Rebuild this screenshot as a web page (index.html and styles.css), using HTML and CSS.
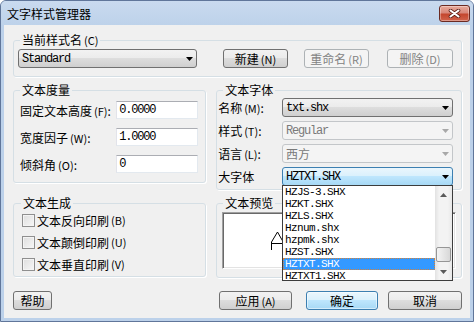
FILE: index.html
```html
<!DOCTYPE html>
<html lang="zh-CN">
<head>
    <meta charset="UTF-8">
    <meta name="viewport" content="width=device-width, initial-scale=1.0">
    <title>文字样式管理器</title>
    <link rel="stylesheet" href="styles.css">
</head>
<body>
    <div class="window">
        <div class="titlebar">
            <span class="title">文字样式管理器</span>
            <button class="close" title="关闭">
                <svg width="13" height="9" viewBox="0 0 13 9">
                    <path d="M2.5 1.5L10.5 7.5M10.5 1.5L2.5 7.5" stroke="#5a1d15" stroke-width="3.6" stroke-linecap="round"/>
                    <path d="M2.5 1.5L10.5 7.5M10.5 1.5L2.5 7.5" stroke="#fff" stroke-width="2.1" stroke-linecap="round"/>
                </svg>
            </button>
        </div>

        <div class="client">
            <fieldset class="group g-current">
                <legend>当前样式名<span class="k">(C)</span></legend>
                <div class="style-row">
                    <div class="combo combo-style">
                        <span class="mono">Standard</span>
                        <svg class="arrow" width="7" height="4" viewBox="0 0 7 4"><path d="M0 0H7L3.5 4Z"/></svg>
                    </div>
                    <button class="btn btn-new">新建<span class="k">(N)</span></button>
                    <button class="btn btn-rename" disabled>重命名<span class="k">(R)</span></button>
                    <button class="btn btn-delete" disabled>删除<span class="k">(D)</span></button>
                </div>
            </fieldset>

            <div class="row">
                <fieldset class="group g-metrics">
                    <legend>文本度量</legend>
                    <div class="field">
                        <label>固定文本高度<span class="k">(F)</span>:</label>
                        <input class="edit" type="text" value="0.0000">
                    </div>
                    <div class="field">
                        <label>宽度因子<span class="k">(W)</span>:</label>
                        <input class="edit" type="text" value="1.0000">
                    </div>
                    <div class="field">
                        <label>倾斜角<span class="k">(O)</span>:</label>
                        <input class="edit" type="text" value="0">
                    </div>
                </fieldset>

                <fieldset class="group g-font">
                    <legend>文本字体</legend>
                    <div class="font-row">
                        <label>名称<span class="k">(M)</span>:</label>
                        <div class="combo combo-font">
                            <span class="mono">txt.shx</span>
                            <svg class="arrow" width="7" height="4" viewBox="0 0 7 4"><path d="M0 0H7L3.5 4Z"/></svg>
                        </div>
                    </div>
                    <div class="font-row">
                        <label>样式<span class="k">(T)</span>:</label>
                        <div class="combo combo-font disabled">
                            <span class="mono">Regular</span>
                            <svg class="arrow" width="7" height="4" viewBox="0 0 7 4"><path d="M0 0H7L3.5 4Z"/></svg>
                        </div>
                    </div>
                    <div class="font-row">
                        <label>语言<span class="k">(L)</span>:</label>
                        <div class="combo combo-font disabled">
                            <span>西方</span>
                            <svg class="arrow" width="7" height="4" viewBox="0 0 7 4"><path d="M0 0H7L3.5 4Z"/></svg>
                        </div>
                    </div>
                    <div class="font-row">
                        <label>大字体</label>
                        <div class="combo-wrap">
                            <div class="combo combo-font hot">
                                <span class="mono">HZTXT.SHX</span>
                                <svg class="arrow" width="7" height="4" viewBox="0 0 7 4"><path d="M0 0H7L3.5 4Z"/></svg>
                            </div>
                            <div class="droplist">
                                <ul class="items">
                                    <li>HZJS-3.SHX</li>
                                    <li>HZKT.SHX</li>
                                    <li>HZLS.SHX</li>
                                    <li>Hznum.shx</li>
                                    <li>hzpmk.shx</li>
                                    <li>HZST.SHX</li>
                                    <li class="selected">HZTXT.SHX</li>
                                    <li>HZTXT1.SHX</li>
                                </ul>
                                <div class="vscroll">
                                    <div class="sb-btn"><svg width="7" height="4" viewBox="0 0 7 4"><path d="M0 4H7L3.5 0Z"/></svg></div>
                                    <div class="sb-track"><div class="sb-thumb"></div></div>
                                    <div class="sb-btn"><svg width="7" height="4" viewBox="0 0 7 4"><path d="M0 0H7L3.5 4Z"/></svg></div>
                                </div>
                            </div>
                        </div>
                    </div>
                </fieldset>
            </div>

            <div class="row">
                <fieldset class="group g-gen">
                    <legend>文本生成</legend>
                    <label class="check"><span class="box"></span>文本反向印刷<span class="k">(B)</span></label>
                    <label class="check"><span class="box"></span>文本颠倒印刷<span class="k">(U)</span></label>
                    <label class="check"><span class="box"></span>文本垂直印刷<span class="k">(V)</span></label>
                </fieldset>

                <fieldset class="group g-preview">
                    <legend>文本预览</legend>
                    <div class="preview">
                        <svg width="232" height="55" viewBox="0 0 232 55">
                            <path d="M48.5 37V29L54.5 19L60.5 29.5M48 30.5H80" fill="none" stroke="#000" stroke-width="1"/>
                        </svg>
                    </div>
                </fieldset>
            </div>

            <div class="footer">
                <button class="btn btn-help">帮助</button>
                <button class="btn btn-apply">应用<span class="k">(A)</span></button>
                <button class="btn btn-ok">确定</button>
                <button class="btn btn-cancel">取消</button>
            </div>
        </div>
    </div>
</body>
</html>
```

FILE: styles.css
```css
* {
    box-sizing: border-box;
}
body {
    margin: 0;
    font-family: "Noto Sans CJK SC", "Liberation Sans", sans-serif;
    font-size: 12px;
    color: #000;
    background: #fff;
}
.window {
    width: 474px;
    height: 322px;
    border: 1px solid #60769a;
    border-radius: 6px 6px 0 0;
    background: #bcd1ea;
    display: flex;
    flex-direction: column;
    overflow: hidden;
}
.titlebar {
    height: 24px;
    flex: none;
    display: flex;
    justify-content: space-between;
    align-items: flex-start;
    padding: 4px 3px 0 6px;
    background: linear-gradient(#c9daef, #bdd2ea);
}
.title {
    margin-top: 2px;
    line-height: 14px;
}
.close {
    width: 31px;
    height: 17px;
    padding: 0;
    display: flex;
    align-items: center;
    justify-content: center;
    border: 1px solid #6b2a22;
    border-radius: 3px;
    background: linear-gradient(#e9aa9b 0%, #d8877a 45%, #c4472f 55%, #d1634c 100%);
    box-shadow: inset 0 0 0 1px rgba(255, 255, 255, 0.35);
}
.client {
    flex: 1;
    margin: 0 3px 3px;
    background: #f0f0f0;
    padding: 9px 8px 0 9px;
    display: flex;
    flex-direction: column;
}

/* group boxes */
.group {
    margin: 0;
    padding: 0;
    min-width: 0;
    border: 1px solid #d5dfe5;
    border-radius: 3px;
    box-shadow: 1px 1px 0 #fff;
}
.group legend {
    margin-left: 6px;
    padding: 0 2px;
    line-height: 12px;
}
.k {
    margin-left: 2px;
    font-size: 11px;
}
.mono {
    font-family: "Liberation Mono", monospace;
    font-size: 12px;
    letter-spacing: -1.2px;
}
.row {
    display: flex;
    align-items: flex-start;
    margin-top: 7px;
}

/* buttons */
.btn {
    height: 19px;
    padding: 0;
    border: 1px solid #707070;
    border-radius: 3px;
    background: linear-gradient(#f2f2f2 0%, #ebebeb 50%, #dddddd 50%, #cfcfcf 100%);
    font-family: inherit;
    font-size: 12px;
    line-height: 17px;
    color: #000;
}
.btn:disabled {
    border-color: #adb2b5;
    background: #f4f4f4;
    color: #838383;
}
.btn-ok {
    border-color: #3c7fb1;
    background: linear-gradient(#eaf6fd 0%, #d9f0fc 50%, #bee6fd 50%, #a7d9f5 100%);
    box-shadow: inset 0 0 0 1px rgba(255, 255, 255, 0.5);
}

/* combos */
.combo {
    height: 19px;
    display: flex;
    align-items: center;
    padding-left: 3px;
    border: 1px solid #707070;
    border-radius: 3px;
    background: linear-gradient(#f2f2f2 0%, #ebebeb 50%, #dddddd 50%, #cfcfcf 100%);
    white-space: nowrap;
}
.combo .arrow {
    margin-left: auto;
    margin-right: 3px;
    fill: #000;
}
.combo.disabled {
    border-color: #c3c6c9;
    background: #f4f4f4;
    color: #7a7a7a;
}
.combo.disabled .arrow {
    fill: #a8a8a8;
}
.combo.hot {
    border-color: #3c7fb1;
    background: linear-gradient(#eaf6fd 0%, #d9f0fc 50%, #bee6fd 50%, #a7d9f5 100%);
}

/* current style */
.g-current .style-row {
    display: flex;
    align-items: center;
    padding: 3px 8px 8px 4px;
}
.combo-style {
    width: 179px;
}
.btn-new {
    width: 65px;
    margin-left: 26px;
}
.btn-rename {
    width: 65px;
    margin-left: 16px;
}
.btn-delete {
    width: 66px;
    margin-left: 18px;
}

/* metrics */
.g-metrics {
    width: 194px;
    padding: 5px 7px 9px 6px;
}
.g-metrics legend {
    margin-left: 0;
}
.field {
    display: flex;
    justify-content: space-between;
    align-items: center;
    height: 18px;
}
.field + .field {
    margin-top: 9px;
}
.edit {
    width: 82px;
    height: 18px;
    margin: 0;
    padding: 0 2px;
    border: 1px solid;
    border-color: #abadb3 #e3e9ef #e3e9ef #e2e3ea;
    background: #fff;
    font-family: "Liberation Mono", monospace;
    font-size: 12px;
    letter-spacing: -1.2px;
    color: #000;
}

/* font */
.g-font {
    width: 247px;
    margin-left: 10px;
    padding: 2px 8px 3px 1px;
}
.g-font legend {
    margin-left: 5px;
}
.font-row {
    display: flex;
    align-items: center;
    height: 19px;
}
.font-row + .font-row {
    margin-top: 4px;
}
.font-row label {
    width: 64px;
}
.combo-font {
    width: 171px;
}
.combo-wrap {
    position: relative;
}
.droplist {
    position: absolute;
    top: 18px;
    left: 0;
    width: 171px;
    height: 96px;
    z-index: 5;
    display: flex;
    border: 1px solid #3c3c3c;
    background: #fff;
}
.items {
    flex: 1;
    margin: 0;
    padding: 0;
    list-style: none;
    overflow: hidden;
}
.items li {
    height: 12px;
    line-height: 12px;
    padding-left: 2px;
    font-family: "Liberation Mono", monospace;
    font-size: 11px;
    letter-spacing: -0.6px;
    white-space: nowrap;
}
.items li.selected {
    background: #3399ff;
    color: #fff;
    outline: 1px dotted #d2813a;
    outline-offset: -1px;
}
.vscroll {
    width: 17px;
    display: flex;
    flex-direction: column;
    background: linear-gradient(90deg, #e2e2e2, #f3f3f3 25%, #f3f3f3 75%, #e8e8e8);
}
.sb-btn {
    height: 17px;
    display: flex;
    align-items: center;
    justify-content: center;
    fill: #5a5a5a;
}
.sb-track {
    flex: 1;
    padding: 0 1px;
}
.sb-thumb {
    margin-top: 44px;
    height: 15px;
    border: 1px solid #969696;
    border-radius: 2px;
    background: linear-gradient(90deg, #f4f4f4, #e6e6e6 50%, #d8d8d8);
}

/* generation */
.g-gen {
    width: 194px;
    padding: 0 7px 1px 8px;
}
.g-gen legend {
    margin-left: -1px;
}
.check {
    display: flex;
    align-items: center;
    height: 22px;
}
.check .box {
    width: 13px;
    height: 13px;
    margin-right: 2px;
    border: 1px solid #8f8f8f;
    background: linear-gradient(135deg, #dedede, #f7f7f7);
    box-shadow: inset 0 0 0 1px #f4f4f4;
}

/* preview */
.g-preview {
    width: 247px;
    margin-left: 10px;
    padding: 3px 5px 8px 5px;
}
.g-preview legend {
    margin-left: 1px;
}
.preview {
    height: 57px;
    border: 1px solid;
    border-color: #a0a0a0 #fff #fff #a0a0a0;
    box-shadow: inset 1px 1px 0 #696969, inset -1px -1px 0 #e3e3e3;
    background: #fff;
}
.preview svg {
    display: block;
}

/* footer */
.footer {
    display: flex;
    margin-top: 13px;
}
.btn-help {
    width: 39px;
}
.btn-apply {
    width: 73px;
    margin-left: auto;
}
.btn-ok {
    width: 72px;
    margin-left: 14px;
}
.btn-cancel {
    width: 74px;
    margin-left: 10px;
}
```
